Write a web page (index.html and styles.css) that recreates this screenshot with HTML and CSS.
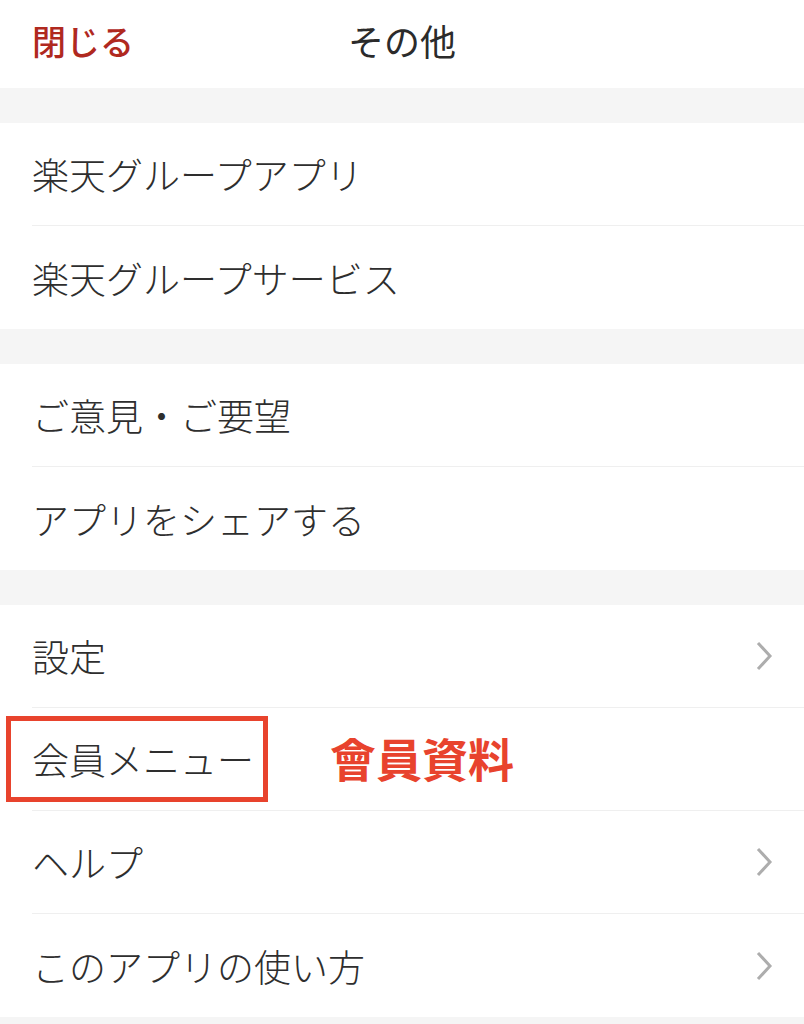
FILE: index.html
```html
<!DOCTYPE html>
<html lang="ja">
<head>
<meta charset="utf-8">
<title>その他</title>
<link rel="stylesheet" href="styles.css">
</head>
<body>
<div class="screen">
  <header class="header">
    <span class="close">閉じる</span>
    <span class="title">その他</span>
  </header>
  <div class="gap"></div>
  <ul class="group">
    <li class="row"><span class="label">楽天グループアプリ</span></li>
    <li class="row"><span class="label">楽天グループサービス</span></li>
  </ul>
  <div class="gap"></div>
  <ul class="group">
    <li class="row"><span class="label">ご意見・ご要望</span></li>
    <li class="row"><span class="label">アプリをシェアする</span></li>
  </ul>
  <div class="gap"></div>
  <ul class="group">
    <li class="row"><span class="label">設定</span>
      <svg class="chev" width="18" height="32" viewBox="0 0 18 32"><polyline points="3,3 15,16 3,29" fill="none" stroke="#adadad" stroke-width="3"/></svg></li>
    <li class="row member"><span class="label">会員メニュー</span>
      <span class="hl-box"></span>
      <span class="hl-note">會員資料</span></li>
    <li class="row"><span class="label">ヘルプ</span>
      <svg class="chev" width="18" height="32" viewBox="0 0 18 32"><polyline points="3,3 15,16 3,29" fill="none" stroke="#adadad" stroke-width="3"/></svg></li>
    <li class="row"><span class="label">このアプリの使い方</span>
      <svg class="chev" width="18" height="32" viewBox="0 0 18 32"><polyline points="3,3 15,16 3,29" fill="none" stroke="#adadad" stroke-width="3"/></svg></li>
  </ul>
  <div class="gap"></div>
</div>
</body>
</html>
```
FILE: styles.css
```css
html, body {
  margin: 0;
  padding: 0;
  background: #ffffff;
}
body {
  font-family: "Noto Sans CJK JP", "Noto Sans", sans-serif;
  color: #333333;
}
.screen {
  width: 804px;
  overflow: hidden;
}
.header {
  height: 88px;
  box-sizing: border-box;
  padding: 0 32px 8px;
  display: flex;
  align-items: center;
  position: relative;
  background: #ffffff;
}
.close {
  font-size: 34px;
  font-weight: 500;
  color: #b0291f;
}
.title {
  position: absolute;
  left: 0;
  right: 0;
  top: 0;
  bottom: 8px;
  display: flex;
  align-items: center;
  justify-content: center;
  font-size: 36px;
  font-weight: 400;
  color: #2b2b2b;
  pointer-events: none;
}
.gap {
  height: 35px;
  background: #f5f5f5;
}
.group {
  list-style: none;
  margin: 0;
  padding: 0;
  background: #ffffff;
}
.row {
  height: 103px;
  margin-left: 32px;
  padding-right: 31px;
  box-sizing: border-box;
  border-bottom: 1px solid #efefef;
  display: flex;
  align-items: center;
  justify-content: space-between;
  position: relative;
}
.row:last-child {
  border-bottom: none;
}
.label {
  font-size: 37px;
  font-weight: 300;
  color: #2e2e2e;
}
.chev {
  display: block;
}
.hl-box {
  position: absolute;
  left: -26px;
  top: 8px;
  width: 262px;
  height: 86px;
  box-sizing: border-box;
  border: 5px solid #e8432d;
}
.hl-note {
  position: absolute;
  left: 298px;
  top: 22px;
  font-family: "Noto Sans CJK TC", "Noto Sans", sans-serif;
  font-size: 46px;
  font-weight: 700;
  color: #e8432d;
  line-height: 1.2;
}
```
